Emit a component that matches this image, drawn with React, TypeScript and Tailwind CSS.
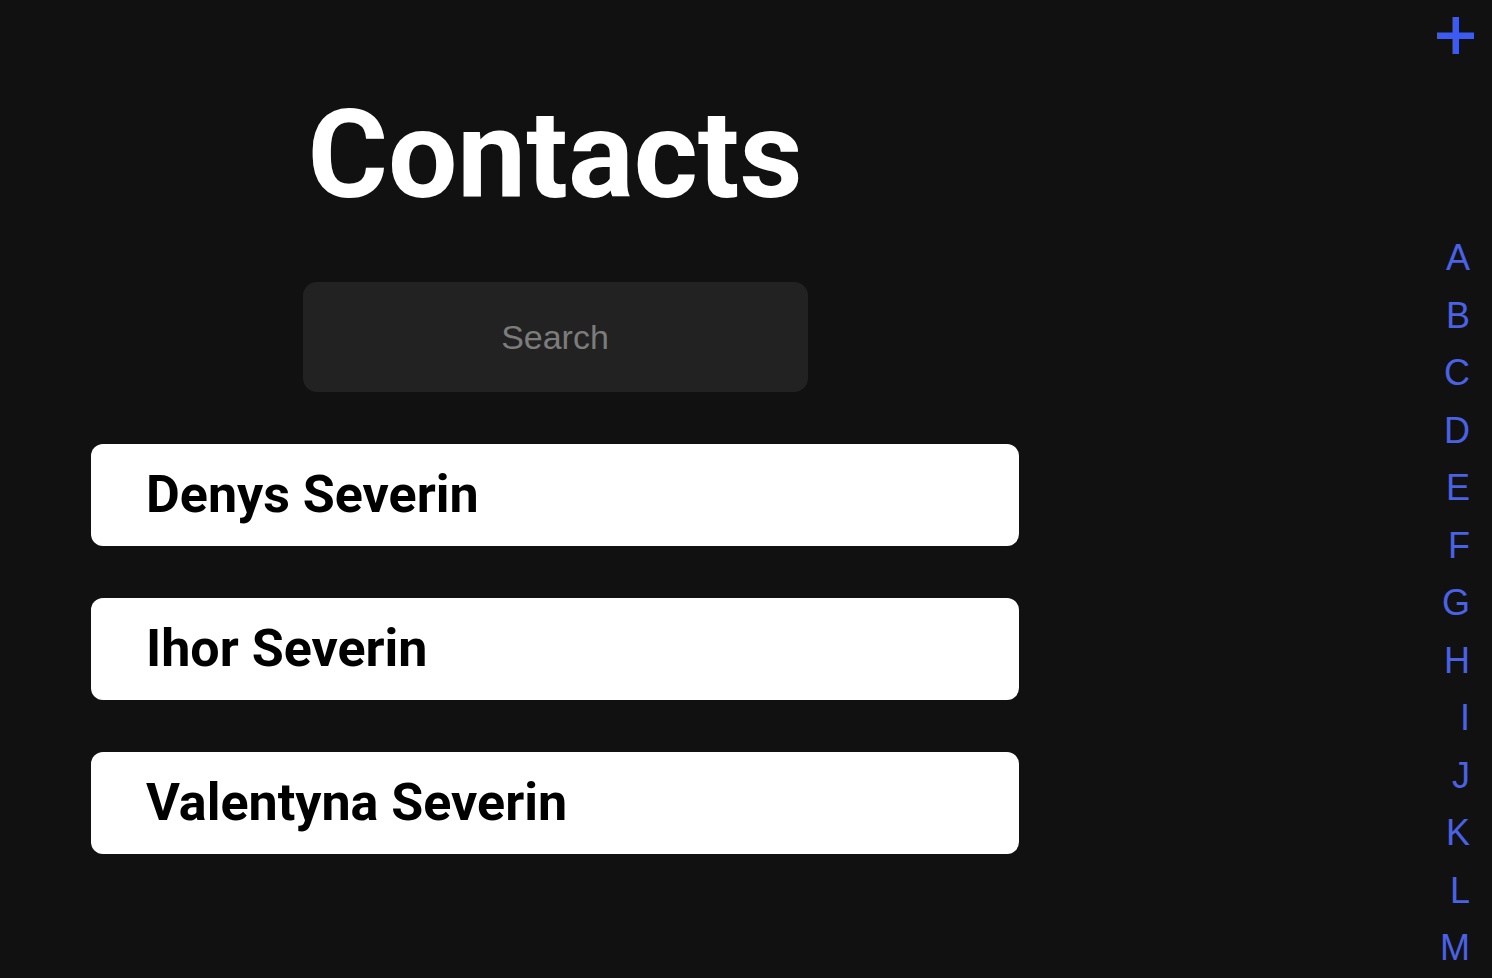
import { useState } from "react";

const contacts = ["Denys Severin", "Ihor Severin", "Valentyna Severin"];
const letters = ["A", "B", "C", "D", "E", "F", "G", "H", "I", "J", "K", "L", "M"];

export default function App() {
  const [query, setQuery] = useState("");

  const filtered = contacts.filter((c) =>
    c.toLowerCase().includes(query.toLowerCase())
  );

  return (
    <div className="flex min-h-screen bg-[#111111] overflow-hidden">
      <div className="flex w-[1110px] flex-col items-center">
        <h1 className="mt-[94px] text-[123px] leading-none font-bold text-white [font-family:Roboto,sans-serif]">
          Contacts
        </h1>

        <input
          value={query}
          onChange={(e) => setQuery(e.target.value)}
          placeholder="Search"
          className="mt-[65px] h-[110px] w-[505px] rounded-[14px] bg-[#222222] text-center text-[34px] text-[#8a8a8a] placeholder:text-[#7c7c7c] outline-none [font-family:'Liberation_Sans',Arial,sans-serif]"
        />

        <div className="mt-[52px] flex w-[928px] flex-col gap-[52px]">
          {filtered.map((name) => (
            <div
              key={name}
              className="flex h-[102px] items-center rounded-[12px] bg-white pl-[55px]"
            >
              <span className="text-[52px] font-bold text-black [font-family:Roboto,sans-serif]">
                {name}
              </span>
            </div>
          ))}
        </div>
      </div>

      <div className="flex flex-1 flex-col items-end">
        <button className="mt-[17px] mr-[18px] text-[#3d5af1]">
          <svg width="37" height="37" viewBox="0 0 37 37">
            <rect x="15.5" y="0" width="6.5" height="37" fill="currentColor" />
            <rect x="0" y="15.5" width="37" height="6.5" fill="currentColor" />
          </svg>
        </button>

        <ul className="mt-[175px] mr-[22px] flex flex-col items-end text-[36px] leading-[57.5px] text-[#4a62e3] [font-family:'Liberation_Sans',Arial,sans-serif]">
          {letters.map((l) => (
            <li key={l}>{l}</li>
          ))}
        </ul>
      </div>
    </div>
  );
}
